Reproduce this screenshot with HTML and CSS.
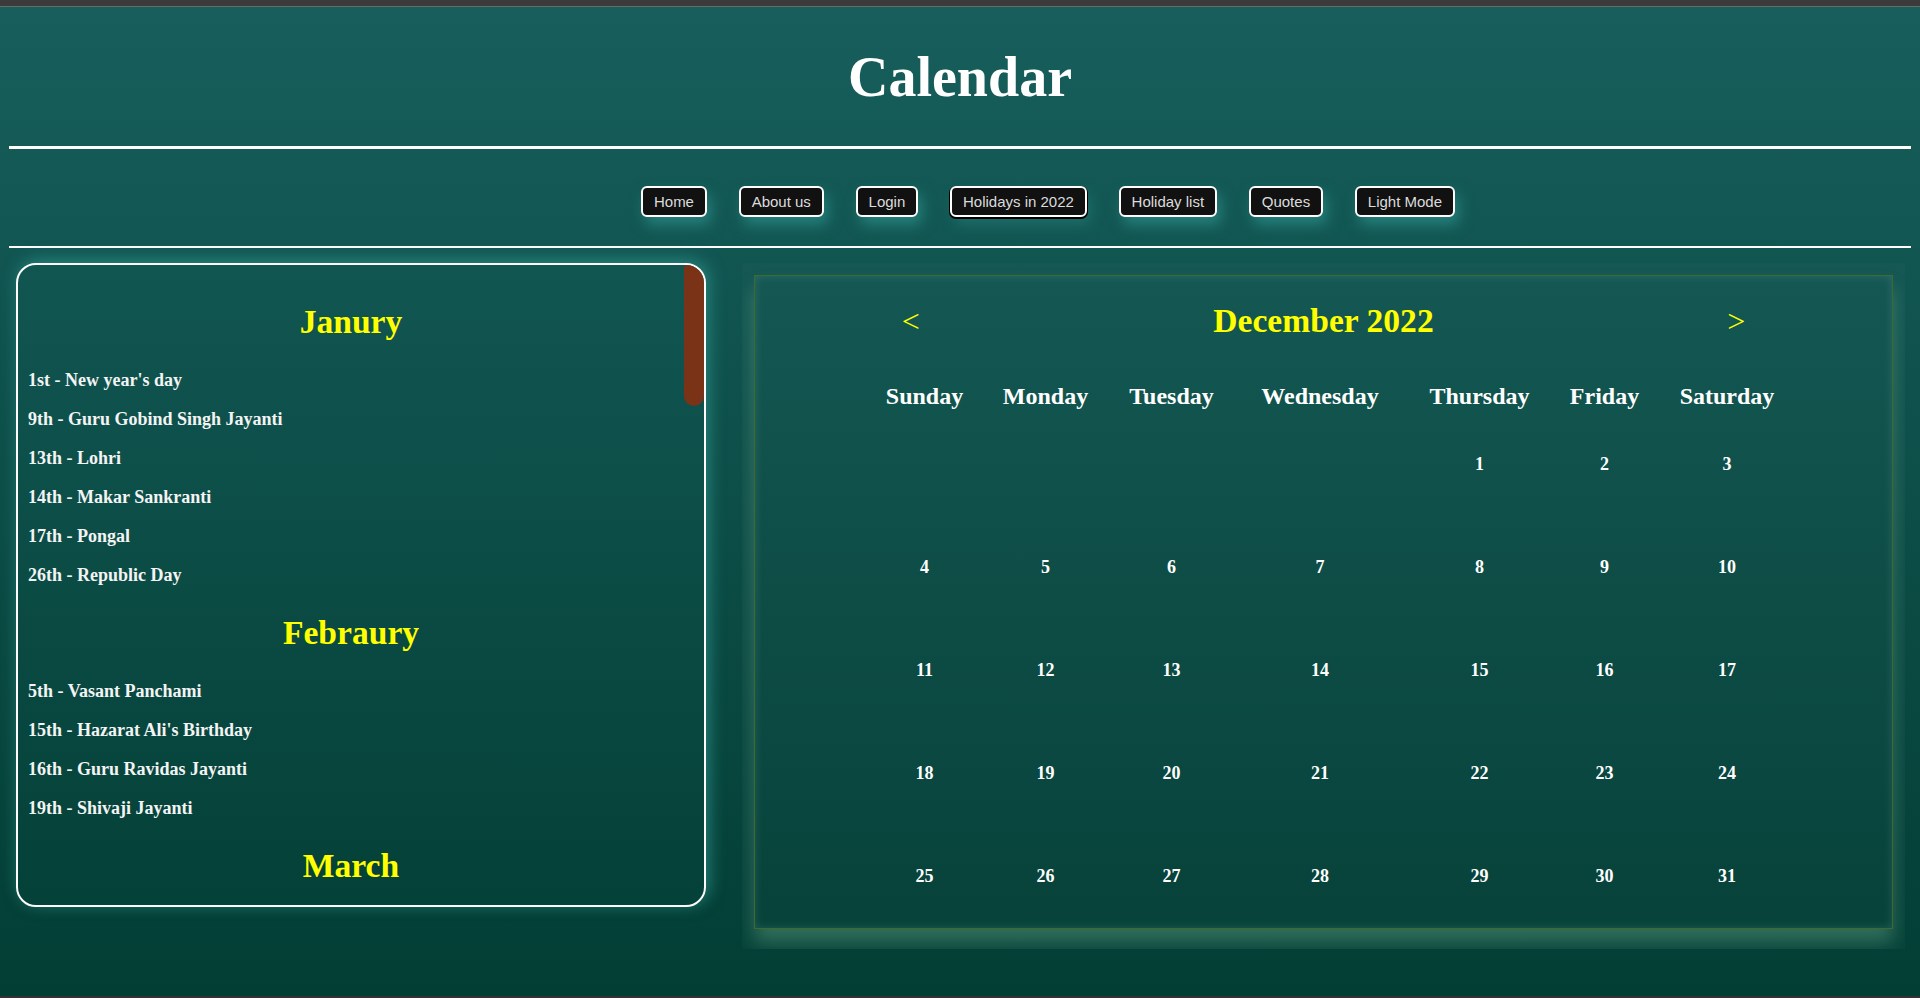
FILE: index.html
```html
<!DOCTYPE html>
<html lang="en">
<head>
<meta charset="utf-8">
<title>Calendar</title>
<link rel="stylesheet" href="styles.css">
</head>
<body>
<div class="topbar"></div>
<main class="page">
  <h1 class="title">Calendar</h1>
  <hr class="rule rule-thick">
  <nav class="nav">
    <button class="nav-btn">Home</button>
    <button class="nav-btn">About us</button>
    <button class="nav-btn">Login</button>
    <button class="nav-btn nav-btn-active">Holidays in 2022</button>
    <button class="nav-btn">Holiday list</button>
    <button class="nav-btn">Quotes</button>
    <button class="nav-btn">Light Mode</button>
  </nav>
  <hr class="rule rule-thin">
  <section class="content">
    <div class="holidays">
      <div class="holidays-list">
        <h2 class="month">Janury</h2>
        <p class="holiday">1st - New year's day</p>
        <p class="holiday">9th - Guru Gobind Singh Jayanti</p>
        <p class="holiday">13th - Lohri</p>
        <p class="holiday">14th - Makar Sankranti</p>
        <p class="holiday">17th - Pongal</p>
        <p class="holiday">26th - Republic Day</p>
        <h2 class="month">Febraury</h2>
        <p class="holiday">5th - Vasant Panchami</p>
        <p class="holiday">15th - Hazarat Ali's Birthday</p>
        <p class="holiday">16th - Guru Ravidas Jayanti</p>
        <p class="holiday">19th - Shivaji Jayanti</p>
        <h2 class="month">March</h2>
      </div>
      <div class="scrollbar"><div class="scroll-thumb"></div></div>
    </div>
    <div class="cal-wrap">
      <div class="cal">
        <div class="cal-head">
          <span class="cal-arrow">&lt;</span>
          <span class="cal-title">December 2022</span>
          <span class="cal-arrow">&gt;</span>
        </div>
        <div class="cal-grid">
          <div class="dayname">Sunday</div>
          <div class="dayname">Monday</div>
          <div class="dayname">Tuesday</div>
          <div class="dayname">Wednesday</div>
          <div class="dayname">Thursday</div>
          <div class="dayname">Friday</div>
          <div class="dayname">Saturday</div>
          <div class="date"></div><div class="date"></div><div class="date"></div><div class="date"></div>
          <div class="date">1</div><div class="date">2</div><div class="date">3</div>
          <div class="date">4</div><div class="date">5</div><div class="date">6</div><div class="date">7</div>
          <div class="date">8</div><div class="date">9</div><div class="date">10</div>
          <div class="date">11</div><div class="date">12</div><div class="date">13</div><div class="date">14</div>
          <div class="date">15</div><div class="date">16</div><div class="date">17</div>
          <div class="date">18</div><div class="date">19</div><div class="date">20</div><div class="date">21</div>
          <div class="date">22</div><div class="date">23</div><div class="date">24</div>
          <div class="date">25</div><div class="date">26</div><div class="date">27</div><div class="date">28</div>
          <div class="date">29</div><div class="date">30</div><div class="date">31</div>
        </div>
      </div>
    </div>
  </section>
</main>
<div class="bottombar"></div>
</body>
</html>
```

FILE: styles.css
```css
* { box-sizing: border-box; }

html, body {
  margin: 0;
  padding: 0;
}

body {
  height: 998px;
  display: flex;
  flex-direction: column;
  overflow: hidden;
  font-family: "Liberation Serif", "Times New Roman", serif;
  background: #023d33;
}

.topbar {
  height: 7px;
  background: #3b3b3b;
  border-bottom: 1px solid #6a6a6a;
  flex: none;
}

.bottombar {
  height: 2px;
  background: #333;
  flex: none;
}

.page {
  flex: 1;
  padding: 0 9px;
  background: linear-gradient(to bottom, #175e5c 0%, #023e34 100%);
  overflow: hidden;
}

.title {
  margin: 38px 0 0;
  font-size: 56px;
  line-height: 64px;
  font-weight: bold;
  text-align: center;
  color: #fff;
}

.rule {
  border: 0;
  margin: 0;
  background: #fff;
}

.rule-thick {
  height: 3px;
  margin-top: 37px;
}

.rule-thin {
  height: 2px;
  margin-top: 29px;
}

.nav {
  margin-top: 37px;
  display: flex;
  justify-content: center;
  align-items: flex-start;
  gap: 31.7px;
  padding-left: 176px;
}

.nav-btn {
  font-family: "Liberation Sans", Arial, sans-serif;
  font-size: 15px;
  line-height: 17px;
  color: #dcdcdc;
  background: #111;
  border: 2px solid #fff;
  border-radius: 6px;
  padding: 5px 11px;
  box-shadow: 4px 8px 14px rgba(52, 160, 154, 0.55);
}

.nav-btn-active {
  box-shadow: 0 1px 0 1px #000, 4px 8px 14px rgba(52, 160, 154, 0.3);
}

.content {
  margin-top: 15px;
  display: flex;
  align-items: flex-start;
  gap: 36px;
  padding: 0 6px 0 7px;
}

.holidays {
  flex: none;
  display: flex;
  align-items: flex-start;
  width: 690px;
  height: 644px;
  border: 2px solid #fff;
  border-radius: 20px;
  overflow: hidden;
  box-shadow: 3px -3px 16px rgba(44, 140, 134, 0.85);
}

.holidays-list {
  flex: 1;
  padding: 10px;
}

.scrollbar {
  flex: none;
  width: 20px;
}

.scroll-thumb {
  height: 141px;
  background: #7b3318;
  border-radius: 4px 0 10px 10px;
}

.month {
  margin: 28px 0 29px;
  font-size: 33.6px;
  font-weight: bold;
  text-align: center;
  color: #ffff00;
}

.holiday {
  margin: 18px 0;
  font-size: 18px;
  font-weight: bold;
  color: #f4f4f4;
}

.cal-wrap {
  flex: 1;
  padding: 12px 12px 20.5px;
  overflow: hidden;
  background: rgba(255, 255, 255, 0.015);
}

.cal {
  border: 1px solid #3e6b2b;
  padding-top: 26px;
  box-shadow: inset 0 0 10px rgba(255, 255, 255, 0.12), 0 14px 18px rgba(150, 210, 170, 0.3);
}

.cal-head {
  display: flex;
  justify-content: space-around;
  align-items: center;
  height: 38px;
  line-height: 38px;
  margin-bottom: 42px;
  color: #ffff00;
}

.cal-arrow {
  font-size: 32px;
  font-weight: normal;
}

.cal-title {
  font-size: 33.6px;
  font-weight: bold;
}

.cal-grid {
  display: grid;
  grid-template-columns: 117px 125px 127px 170px 149px 101px 144px;
  grid-template-rows: 30.5px repeat(5, 103px);
  justify-content: center;
  padding-left: 18px;
  color: #fff;
}

.dayname {
  align-self: start;
  text-align: center;
  font-size: 24px;
  line-height: 28px;
  font-weight: bold;
}

.date {
  align-self: center;
  text-align: center;
  font-size: 18px;
  line-height: 21px;
  font-weight: bold;
}
```
